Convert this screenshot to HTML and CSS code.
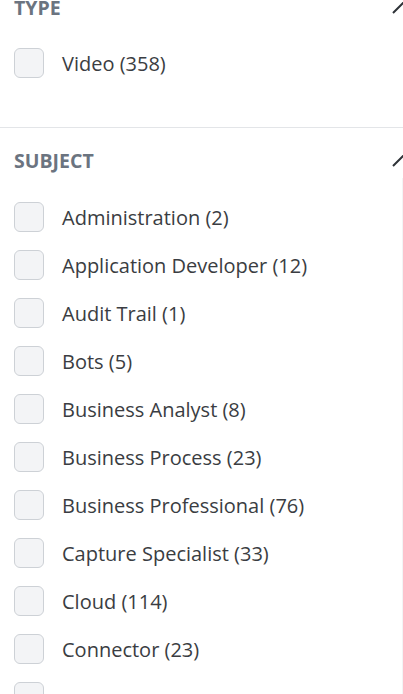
FILE: index.html
```html
<!DOCTYPE html>
<html lang="en">
<head>
<meta charset="utf-8">
<title>Filters</title>
<link rel="stylesheet" href="styles.css">
</head>
<body>
<div class="panel">
  <section class="section first">
    <div class="head">
      <span class="title">TYPE</span>
      <svg class="chev" width="22" height="12" viewBox="0 0 22 12"><polyline points="1,11 11,1 21,11" fill="none" stroke="#2f3338" stroke-width="2"/></svg>
    </div>
    <div class="list">
      <label class="row"><span class="box"></span><span class="label">Video (358)</span></label>
    </div>
  </section>
  <section class="section second">
    <div class="head">
      <span class="title">SUBJECT</span>
      <svg class="chev" width="22" height="12" viewBox="0 0 22 12"><polyline points="1,11 11,1 21,11" fill="none" stroke="#2f3338" stroke-width="2"/></svg>
    </div>
    <div class="list scroll">
      <label class="row"><span class="box"></span><span class="label">Administration (2)</span></label>
      <label class="row"><span class="box"></span><span class="label">Application Developer (12)</span></label>
      <label class="row"><span class="box"></span><span class="label">Audit Trail (1)</span></label>
      <label class="row"><span class="box"></span><span class="label">Bots (5)</span></label>
      <label class="row"><span class="box"></span><span class="label">Business Analyst (8)</span></label>
      <label class="row"><span class="box"></span><span class="label">Business Process (23)</span></label>
      <label class="row"><span class="box"></span><span class="label">Business Professional (76)</span></label>
      <label class="row"><span class="box"></span><span class="label">Capture Specialist (33)</span></label>
      <label class="row"><span class="box"></span><span class="label">Cloud (114)</span></label>
      <label class="row"><span class="box"></span><span class="label">Connector (23)</span></label>
      <label class="row"><span class="box"></span></label>
    </div>
  </section>
</div>
</body>
</html>
```

FILE: styles.css
```css
html, body {
  margin: 0;
  padding: 0;
  background: #ffffff;
  overflow: hidden;
  width: 403px;
  height: 694px;
}

.panel {
  font-family: "Open Sans", "Noto Sans", sans-serif;
  color: #3a3d42;
}

.section {
  display: flex;
  flex-direction: column;
}

.first {
  padding-bottom: 49px;
  border-bottom: 1px solid #e3e5e8;
}

.second {
  padding-top: 25px;
}

.head {
  display: flex;
  justify-content: space-between;
  align-items: center;
  height: 16px;
  padding-left: 14px;
  margin-bottom: 32px;
}

.title {
  font-size: 19.5px;
  line-height: 16px;
  font-weight: 700;
  color: #6b7480;
}

.chev {
  margin-right: -11px;
  display: block;
  flex: none;
}

.second .head {
  margin-bottom: 9px;
}

.list {
  display: flex;
  flex-direction: column;
  gap: 18px;
  padding-left: 14px;
}

.scroll {
  padding-top: 24px;
  border-right: 1px solid #f3f4f5;
}

.row {
  display: flex;
  align-items: center;
  gap: 18px;
  height: 30px;
}

.box {
  width: 28px;
  height: 28px;
  border: 1px solid #cdd1d6;
  border-radius: 6px;
  background: #f3f4f6;
  flex: none;
}

.label {
  font-size: 20px;
  color: #3a3d42;
  white-space: nowrap;
}
```
